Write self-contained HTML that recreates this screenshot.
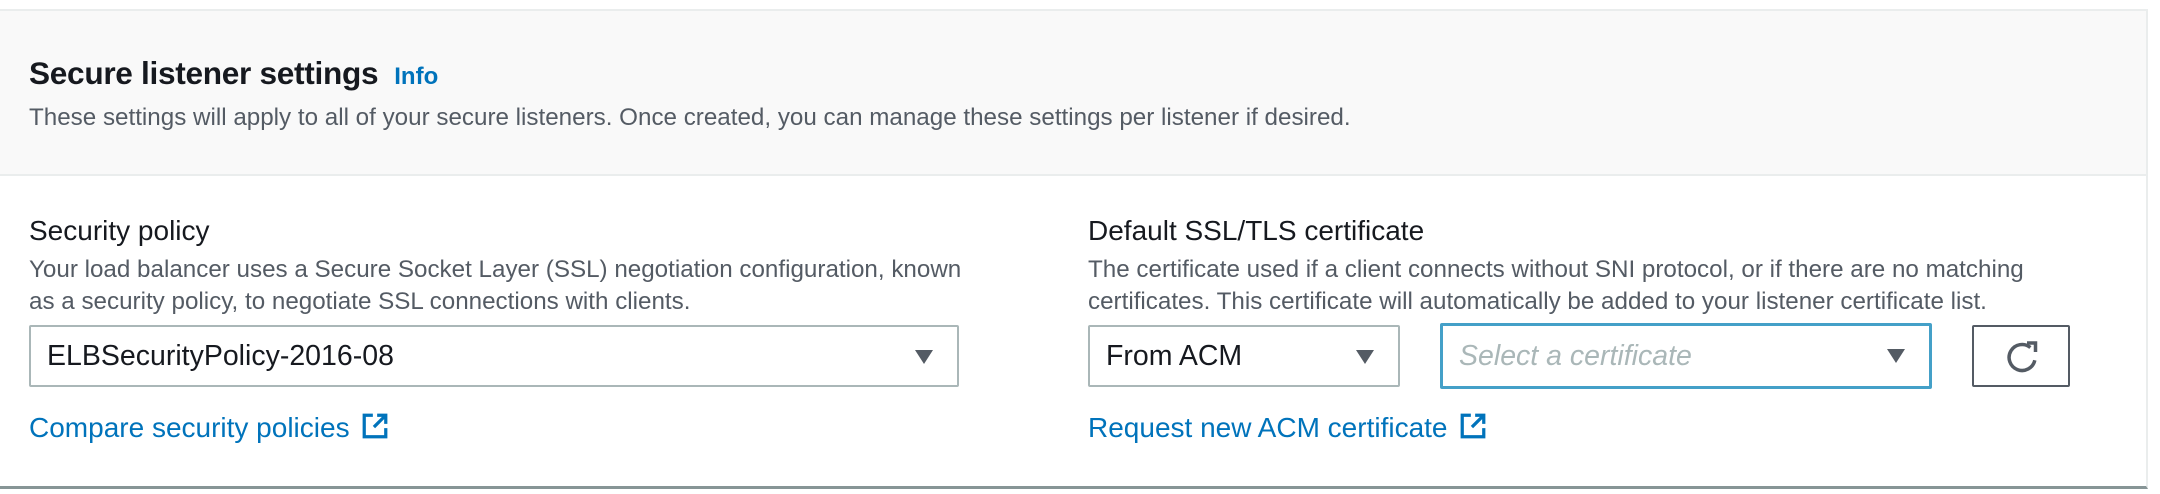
<!DOCTYPE html>
<html><head><meta charset="utf-8"><style>
*{margin:0;padding:0;box-sizing:border-box}
body{width:2160px;height:494px;background:#fff;font-family:"Liberation Sans",sans-serif;position:relative;overflow:hidden;color:#16191f}
.abs{position:absolute;white-space:nowrap}
.card{position:absolute;left:0;top:9px;width:2148px;height:480px;border-top:2px solid #eaeded;border-right:2px solid #eaeded;border-bottom:3px solid #879596;}
.head{position:absolute;left:0;top:11px;width:2146px;height:165px;background:#f9f9f9;border-bottom:2px solid #eaeded}
h1{font-size:31.6px;font-weight:bold;letter-spacing:-0.3px}
.info{color:#0073bb;font-size:24px;font-weight:bold}
.desc{font-size:24.2px;color:#545b64}
.label{font-size:28px;color:#16191f;line-height:32px}
.sel{position:absolute;height:62px;border:2px solid #aab7b8;border-radius:2px;font-size:28.5px;padding-left:16px;line-height:58px}
.tri{position:absolute;right:24px;top:23px;width:0;height:0;border-left:9px solid transparent;border-right:9px solid transparent;border-top:14px solid #545b64}
.link{font-size:28px;color:#0073bb;line-height:32px}
</style></head><body>
<div class="card"></div>
<div class="head"></div>
<div class="abs" style="left:29px;top:55px;line-height:36px"><h1 style="display:inline">Secure listener settings</h1><span class="info" style="margin-left:16px">Info</span></div>
<div class="abs desc" style="left:29px;top:103px;line-height:30px">These settings will apply to all of your secure listeners. Once created, you can manage these settings per listener if desired.</div>

<div class="abs label" style="left:29px;top:215px">Security policy</div>
<div class="abs desc" style="left:29px;top:254px;line-height:32px">Your load balancer uses a Secure Socket Layer (SSL) negotiation configuration, known<br>as a security policy, to negotiate SSL connections with clients.</div>
<div class="sel" style="left:29px;top:325px;width:930px">ELBSecurityPolicy-2016-08<div class="tri"></div></div>
<div class="abs link" style="left:29px;top:412px">Compare security policies <svg width="28" height="28" viewBox="0 0 26 26" style="vertical-align:-3px;margin-left:4px"><path d="M11 3H3v20h20v-8" fill="none" stroke="#0073bb" stroke-width="3"/><path d="M15 3h8v8M23 3L12 14" fill="none" stroke="#0073bb" stroke-width="3"/></svg></div>

<div class="abs label" style="left:1088px;top:215px">Default SSL/TLS certificate</div>
<div class="abs desc" style="left:1088px;top:254px;line-height:32px">The certificate used if a client connects without SNI protocol, or if there are no matching<br>certificates. This certificate will automatically be added to your listener certificate list.</div>
<div class="sel" style="left:1088px;top:325px;width:312px">From ACM<div class="tri"></div></div>
<div class="sel" style="left:1440px;top:323px;width:492px;height:66px;border:3px solid #44a0c8;color:#aab7b8;font-style:italic;line-height:60px">Select a certificate<div class="tri"></div></div>
<div class="sel" style="left:1972px;top:325px;width:98px;border-color:#545b64;padding:0">
<svg width="94" height="58" viewBox="0 0 94 58" style="position:absolute;left:0;top:0"><path d="M56.4 20.5A13 13 0 1 0 60.8 33.3" fill="none" stroke="#545b64" stroke-width="3.5"/><path d="M53 16H61.5V25" fill="none" stroke="#545b64" stroke-width="3.5"/></svg></div>
<div class="abs link" style="left:1088px;top:412px">Request new ACM certificate <svg width="28" height="28" viewBox="0 0 26 26" style="vertical-align:-3px;margin-left:4px"><path d="M11 3H3v20h20v-8" fill="none" stroke="#0073bb" stroke-width="3"/><path d="M15 3h8v8M23 3L12 14" fill="none" stroke="#0073bb" stroke-width="3"/></svg></div>
</body></html>
